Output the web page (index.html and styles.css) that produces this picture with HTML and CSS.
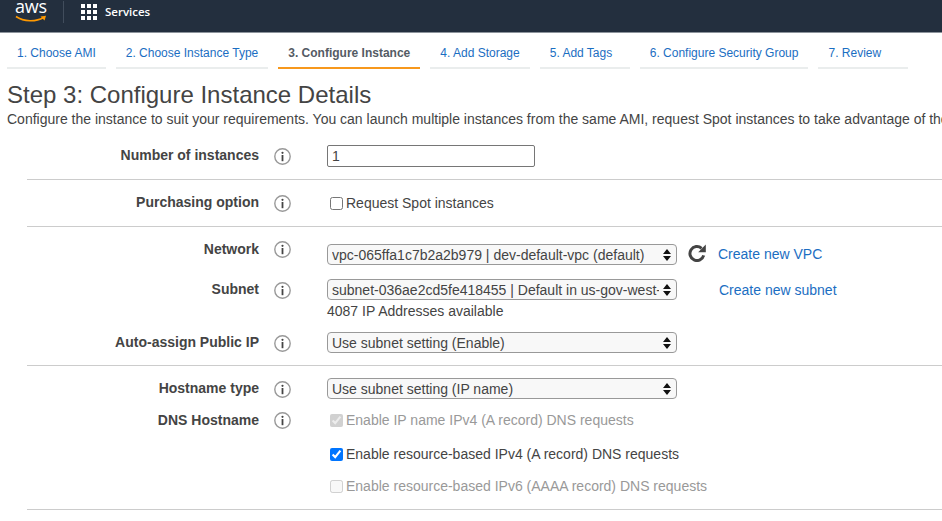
FILE: index.html
```html
<!doctype html>
<html lang="en">
  <head>
    <meta charset="UTF-8" />
    <title>Launch instance wizard</title>
    <link rel="stylesheet" href="styles.css">
  </head>
  <body>
    <svg class="defs" width="0" height="0">
      <symbol id="info" viewBox="0 0 17 17">
        <circle cx="8.5" cy="8.5" r="7.7" fill="#fff" stroke="#999" stroke-width="1.4"/>
        <circle cx="8.5" cy="4.8" r="1.1" fill="#444"/>
        <rect x="7.6" y="7" width="1.8" height="6.2" fill="#444"/>
      </symbol>
    </svg>

    <header class="topbar">
      <div class="logo">
        <span class="logo-text">aws</span>
        <svg class="logo-smile" width="32" height="8" viewBox="0 0 32 8">
          <path d="M1 1.5C9 7 21 7 28.5 2.5" fill="none" stroke="#f90" stroke-width="1.6"/>
          <path d="M25.5 1.5L31 .8 29.5 5.5z" fill="#f90"/>
        </svg>
      </div>
      <div class="divider"></div>
      <div class="services-grid"><i></i><i></i><i></i><i></i><i></i><i></i><i></i><i></i><i></i></div>
      <span class="services">Services</span>
    </header>

    <nav class="tabs">
      <a class="tab">1. Choose AMI</a>
      <a class="tab">2. Choose Instance Type</a>
      <a class="tab active">3. Configure Instance</a>
      <a class="tab">4. Add Storage</a>
      <a class="tab">5. Add Tags</a>
      <a class="tab">6. Configure Security Group</a>
      <a class="tab">7. Review</a>
    </nav>

    <h1>Step 3: Configure Instance Details</h1>
    <p class="intro">Configure the instance to suit your requirements. You can launch multiple instances from the same AMI, request Spot instances to take advantage of the lower pricing, assign an access management role to the instance, and more.</p>

    <form>
      <section class="section first">
        <div class="row">
          <label class="name">Number of instances</label>
          <svg class="info"><use href="#info"/></svg>
          <div class="control"><input class="text-input" type="text" value="1"></div>
        </div>
      </section>

      <section class="section second">
        <div class="row">
          <label class="name">Purchasing option</label>
          <svg class="info"><use href="#info"/></svg>
          <label class="check"><input type="checkbox">Request Spot instances</label>
        </div>
      </section>

      <section class="section third">
        <div class="row network">
          <label class="name">Network</label>
          <svg class="info"><use href="#info"/></svg>
          <div class="control">
            <select><option>vpc-065ffa1c7b2a2b979 | dev-default-vpc (default)</option></select>
            <svg class="refresh" width="18" height="18" viewBox="0 0 18 18">
              <path d="M13.6 4.3A7 7 0 1 0 15.7 11.4" fill="none" stroke="#444" stroke-width="3"/>
              <path d="M17.8 .6V8.2H10.2z" fill="#444"/>
            </svg>
            <a class="link">Create new VPC</a>
          </div>
        </div>
        <div class="row subnet">
          <label class="name">Subnet</label>
          <svg class="info"><use href="#info"/></svg>
          <div class="control">
            <select><option>subnet-036ae2cd5fe418455 | Default in us-gov-west-1a</option></select>
            <a class="link subnet-link">Create new subnet</a>
          </div>
        </div>
        <div class="row help-row">
          <div class="help">4087 IP Addresses available</div>
        </div>
        <div class="row">
          <label class="name">Auto-assign Public IP</label>
          <svg class="info"><use href="#info"/></svg>
          <div class="control">
            <select><option>Use subnet setting (Enable)</option></select>
          </div>
        </div>
      </section>

      <section class="section fourth">
        <div class="row">
          <label class="name">Hostname type</label>
          <svg class="info"><use href="#info"/></svg>
          <div class="control">
            <select><option>Use subnet setting (IP name)</option></select>
          </div>
        </div>
        <div class="row dns">
          <label class="name">DNS Hostname</label>
          <svg class="info"><use href="#info"/></svg>
          <label class="check off"><input type="checkbox" checked disabled>Enable IP name IPv4 (A record) DNS requests</label>
        </div>
        <div class="row dns-second">
          <label class="check"><input type="checkbox" checked>Enable resource-based IPv4 (A record) DNS requests</label>
        </div>
        <div class="row dns-third">
          <label class="check off"><input type="checkbox" disabled>Enable resource-based IPv6 (AAAA record) DNS requests</label>
        </div>
      </section>
    </form>
  </body>
</html>
```

FILE: styles.css
```css
html, body {
  height: 100%;
}
body {
  margin: 0;
  overflow: hidden;
  background: #fff;
  color: #444;
  font-family: "Liberation Sans", Arial, sans-serif;
  font-size: 14px;
}
.defs {
  display: block;
  height: 0;
}

/* top bar */
.topbar {
  display: flex;
  align-items: flex-start;
  height: 32px;
  background: #232f3e;
  border-bottom: 1px solid #8d949c;
}
.logo {
  display: flex;
  flex-direction: column;
  width: 33px;
  margin-left: 15px;
}
.logo-text {
  height: 14px;
  color: #fff;
  font-family: "Open Sans", sans-serif;
  font-size: 18px;
  line-height: 13px;
  letter-spacing: -.2px;
}
.logo-smile {
  display: block;
  margin-top: 1px;
}
.divider {
  width: 1px;
  height: 22px;
  margin: 1px 17px 0 15px;
  background: #414d5c;
}
.services-grid {
  display: grid;
  grid-template-columns: repeat(3, 4px);
  grid-auto-rows: 4px;
  gap: 2px;
  margin-top: 4px;
}
.services-grid i {
  background: #fff;
}
.services {
  margin: 3px 0 0 8px;
  color: #fff;
  font-family: "Open Sans", sans-serif;
  font-size: 11.5px;
  font-weight: 600;
  line-height: 18px;
}

/* wizard tabs */
.tabs {
  display: flex;
  gap: 10px;
  margin-top: 11px;
  padding: 0 7px;
}
.tab {
  box-sizing: border-box;
  min-width: 90px;
  padding: 0 10px 5px;
  border-bottom: 2px solid #eaeded;
  color: #1b6ec2;
  font-size: 12px;
  line-height: 18px;
  white-space: nowrap;
}
.tab.active {
  border-bottom-color: #f7981c;
  color: #545b64;
  font-weight: bold;
}

h1 {
  margin: 12px 0 0 7px;
  font-size: 24px;
  font-weight: normal;
  line-height: 28px;
}
.intro {
  margin: 1px 0 0 7px;
  line-height: 18px;
  white-space: nowrap;
}

/* form rows */
.section {
  margin-left: 27px;
  border-bottom: 1px solid #ccc;
}
.first {
  padding: 17px 0 12px;
}
.second {
  padding: 12px 0;
}
.third {
  padding: 11px 0;
}
.fourth {
  padding: 12px 0;
}
.row {
  display: grid;
  grid-template-columns: 232px 17px 1fr;
  column-gap: 15.5px;
  align-items: center;
  height: 22px;
}
.row .info {
  margin-left: -.5px;
}
.name {
  padding-bottom: 2px;
  font-weight: bold;
  text-align: right;
  white-space: nowrap;
}
.info {
  width: 17px;
  height: 17px;
  margin-left: 0;
}
.control {
  display: flex;
  align-items: flex-start;
  margin-left: 20px;
}
.text-input {
  box-sizing: border-box;
  width: 208px;
  height: 22px;
  padding: 0 4px;
  border: 1px solid #767676;
  border-radius: 2px;
  color: #444;
  font: 14px "Liberation Sans", Arial, sans-serif;
}
select {
  box-sizing: border-box;
  width: 350px;
  height: 21px;
  margin-bottom: 1px;
  padding: 0 17px 0 4px;
  appearance: none;
  border: 1px solid #999;
  border-radius: 4px;
  background: #f8f8f8 url("data:image/svg+xml,%3Csvg xmlns='http://www.w3.org/2000/svg' width='10' height='12'%3E%3Cpath d='M5 0L9 5H1zM5 12L1 7H9z' fill='%23111'/%3E%3C/svg%3E") no-repeat right 4px center;
  color: #444;
  font: 14px "Liberation Sans", Arial, sans-serif;
}
.refresh {
  margin-left: 11px;
  flex: none;
}
.link {
  margin-left: 12px;
  color: #1b6ec2;
  line-height: 20px;
  white-space: nowrap;
}
.subnet-link {
  margin-top: 1px;
  margin-left: 42px;
}
.network {
  height: 28px;
  align-items: start;
}
.network .name {
  line-height: 22px;
}
.network .info {
  margin-top: 3px;
}
.network .control {
  margin-top: 6px;
}
.subnet {
  margin-top: 13px;
}
.help-row {
  height: 18px;
  margin-top: 1px;
  margin-bottom: 12px;
}
.help {
  grid-column: 3;
  margin-left: 20px;
  line-height: 18px;
  white-space: nowrap;
}
.check {
  display: flex;
  align-items: center;
  grid-column: 3;
  margin-left: 20px;
  white-space: nowrap;
}
.check input {
  width: 13px;
  height: 13px;
  margin: 0 3px;
}
.check.off {
  color: #999;
}
.dns {
  margin-top: 9px;
}
.dns .name {
  padding-bottom: 0;
}
.dns-second {
  margin-top: 12px;
}
.dns-third {
  margin-top: 10px;
}
```
